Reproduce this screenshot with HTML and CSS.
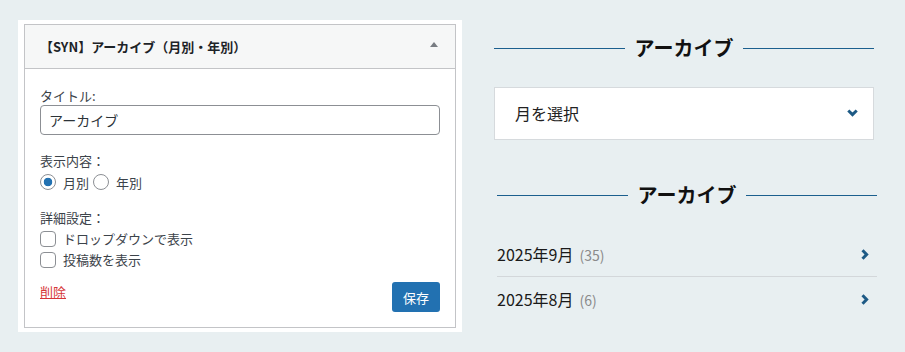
FILE: index.html
```html
<!doctype html>
<html>
    <head>
        <meta charset=utf-8>
        <title>アーカイブ</title>
        <link rel="stylesheet" href="styles.css">
    </head>
    <body>
        <div class="page">
            <section class="widget-panel">
                <div class="widget-box">
                    <div class="widget-top">
                        <h3>【SYN】アーカイブ（月別・年別）</h3>
                        <span class="toggle"></span>
                    </div>
                    <form class="widget-inside">
                        <label class="field-label" for="title">タイトル:</label>
                        <input class="text-input" id="title" type=text value="アーカイブ">

                        <div class="field-label group-label">表示内容：</div>
                        <div class="radio-row">
                            <label class="choice"><input type=radio name="type" checked>月別</label>
                            <label class="choice"><input type=radio name="type">年別</label>
                        </div>

                        <div class="field-label group-label">詳細設定：</div>
                        <div class="check-list">
                            <label class="choice"><input type=checkbox>ドロップダウンで表示</label>
                            <label class="choice"><input type=checkbox>投稿数を表示</label>
                        </div>

                        <div class="widget-footer">
                            <a class="remove-link" href="#">削除</a>
                            <button class="save-button" type=button>保存</button>
                        </div>
                    </form>
                </div>
            </section>

            <aside class="sidebar">
                <div class="side-widget">
                    <h2 class="widget-title">アーカイブ</h2>
                    <div class="month-select">
                        <span>月を選択</span>
                        <svg width="11" height="8" viewBox="0 0 11 8"><path d="M1.3 1.5 L5.5 5.6 L9.7 1.5" fill="none" stroke="#1d5a85" stroke-width="3"/></svg>
                    </div>
                </div>

                <div class="side-widget second">
                    <h2 class="widget-title">アーカイブ</h2>
                    <ul class="archive-list">
                        <li>
                            <span>2025年9月<span class="count">(35)</span></span>
                            <svg width="8" height="11" viewBox="0 0 8 11"><path d="M1.5 1.3 L5.6 5.5 L1.5 9.7" fill="none" stroke="#1d5a85" stroke-width="3"/></svg>
                        </li>
                        <li>
                            <span>2025年8月<span class="count">(6)</span></span>
                            <svg width="8" height="11" viewBox="0 0 8 11"><path d="M1.5 1.3 L5.6 5.5 L1.5 9.7" fill="none" stroke="#1d5a85" stroke-width="3"/></svg>
                        </li>
                    </ul>
                </div>
            </aside>
        </div>
    </body>
</html>
```

FILE: styles.css
```css
body {
    margin: 0;
    background: #e8eff1;
    font-family: "Noto Sans CJK JP", "Noto Sans", sans-serif;
}

.page {
    display: flex;
    align-items: flex-start;
}

/* admin widget form */
.widget-panel {
    width: 444px;
    margin: 20px 0 0 18px;
    padding: 4px 6px;
    box-sizing: border-box;
    background: #fff;
}

.widget-box {
    border: 1px solid #c3c4c7;
}

.widget-top {
    height: 43px;
    display: flex;
    align-items: center;
    justify-content: space-between;
    padding: 0 17px 0 15px;
    background: #f6f7f7;
    border-bottom: 1px solid #c3c4c7;
}

.widget-top h3 {
    margin: 0;
    font-size: 13px;
    line-height: 18px;
    font-weight: 700;
    color: #1d2327;
}

.toggle {
    width: 0;
    height: 0;
    margin-bottom: 4px;
    border-left: 4px solid transparent;
    border-right: 4px solid transparent;
    border-bottom: 5px solid #787c82;
}

.widget-inside {
    display: flex;
    flex-direction: column;
    padding: 18px 15px 15px;
    margin: 0;
}

.field-label {
    display: block;
    font-size: 13px;
    line-height: 18px;
    color: #3c434a;
}

.group-label {
    margin-top: 17px;
}

.text-input {
    display: block;
    width: 100%;
    height: 30px;
    box-sizing: border-box;
    margin: 0;
    padding: 0 8px;
    border: 1px solid #8c8f94;
    border-radius: 4px;
    font-family: inherit;
    font-size: 14px;
    color: #2c3338;
}

.radio-row {
    display: flex;
    margin-top: 3px;
    padding-bottom: 1px;
}

.check-list {
    margin-top: 1px;
}

.choice {
    display: flex;
    align-items: center;
    height: 21px;
    font-size: 13px;
    color: #3c434a;
}

.radio-row .choice {
    height: 18px;
    margin-right: 4px;
}

.choice input {
    -webkit-appearance: none;
    appearance: none;
    width: 16px;
    height: 16px;
    margin: 0 7px 0 0;
    border: 1px solid #8c8f94;
    background: #fff;
}

.choice input[type=radio] {
    border-radius: 50%;
}

.choice input[type=radio]:checked {
    background: radial-gradient(circle, #2271b1 0 4px, #fff 4.6px);
}

.choice input[type=checkbox] {
    border-radius: 4px;
}

.widget-footer {
    display: flex;
    justify-content: space-between;
    align-items: flex-start;
    margin-top: 12px;
}

.remove-link {
    margin-top: 1px;
    font-size: 13px;
    line-height: 18px;
    color: #d63638;
}

.save-button {
    width: 48px;
    height: 30px;
    padding: 0;
    border: none;
    border-radius: 3px;
    background: #2271b1;
    color: #fff;
    font-family: inherit;
    font-size: 13px;
}

/* front sidebar */
.sidebar {
    width: 383px;
    margin-left: 32px;
}

.side-widget {
    width: 380px;
}

.side-widget.second {
    margin: 41px 0 0 3px;
}

.widget-title {
    display: flex;
    align-items: center;
    gap: 10px;
    margin: 34px 0 0;
    font-size: 20px;
    line-height: 28px;
    font-weight: 700;
    color: #111;
}

.second .widget-title {
    margin-top: 0;
}

.widget-title::before,
.widget-title::after {
    content: "";
    flex: 1;
    height: 1px;
    background: #1b5f8e;
}

.month-select {
    display: flex;
    align-items: center;
    justify-content: space-between;
    height: 53px;
    box-sizing: border-box;
    margin-top: 25px;
    padding: 0 15px 1px 20px;
    background: #fff;
    border: 1px solid #d6dadd;
    font-size: 16px;
    color: #222;
}

.archive-list {
    list-style: none;
    margin: 23px 0 0;
    padding: 0;
}

.archive-list li {
    display: flex;
    align-items: center;
    justify-content: space-between;
    height: 44px;
    padding-right: 8px;
    font-size: 16px;
    color: #1a1a1a;
}

.archive-list li + li {
    border-top: 1px solid #d3d7da;
}

.count {
    margin-left: 6px;
    font-size: 14px;
    color: #8a8a8a;
}
```
